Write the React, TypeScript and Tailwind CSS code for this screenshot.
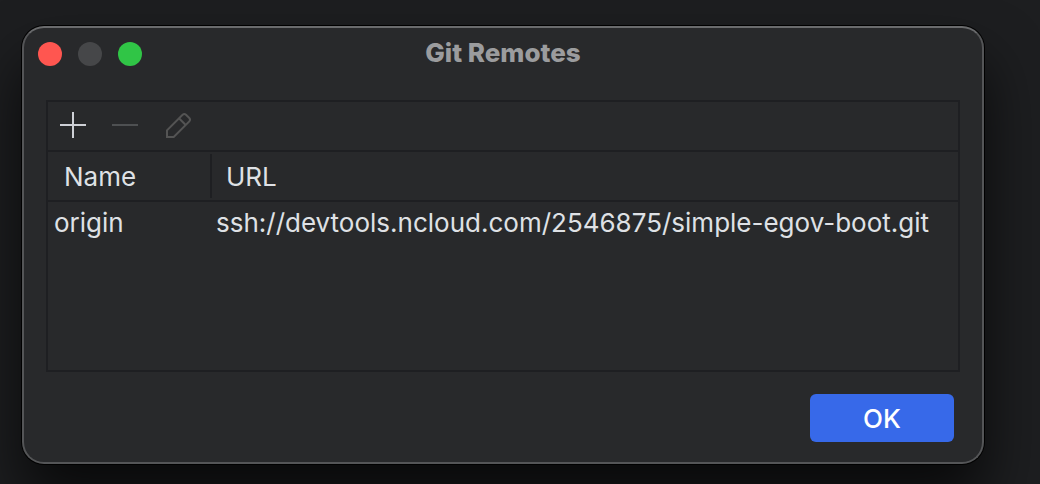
import { useState } from "react";

type Remote = { name: string; url: string };

const remotes: Remote[] = [
  { name: "origin", url: "ssh://devtools.ncloud.com/2546875/simple-egov-boot.git" },
];

function AddIcon() {
  return (
    <svg viewBox="0 0 32 32" className="size-8" fill="none" stroke="currentColor" strokeWidth="2" aria-hidden="true">
      <path d="M3 15H29M16 2V28" />
    </svg>
  );
}

function RemoveIcon() {
  return (
    <svg viewBox="0 0 32 32" className="size-8" fill="none" stroke="currentColor" strokeWidth="2" aria-hidden="true">
      <path d="M3 15H29" />
    </svg>
  );
}

function EditIcon() {
  return (
    <svg viewBox="0 0 32 32" className="size-8" fill="none" stroke="currentColor" strokeWidth="2" aria-hidden="true">
      <path d="M6 27V20.3L21.6 4.7Q23.3 3.2 25 4.7L28.3 8Q29.8 9.7 28.3 11.4L12.7 27Z" />
      <path d="M18 8.3L24.7 15" />
    </svg>
  );
}

function TitleBar() {
  return (
    <header className="grid h-[52px] grid-cols-[1fr_auto_1fr] items-center px-3.5">
      <div className="flex gap-4">
        <button type="button" aria-label="Close" className="size-6 rounded-full bg-[#ff5650]" />
        <button type="button" aria-label="Minimize" disabled className="size-6 rounded-full bg-[#464749]" />
        <button type="button" aria-label="Zoom" className="size-6 rounded-full bg-[#30c546]" />
      </div>
      <h1 className="pb-0.5 text-[26px] leading-8 font-extrabold text-[#9b9c9e]">Git Remotes</h1>
    </header>
  );
}

function Toolbar() {
  return (
    <div className="flex h-[50px] items-center gap-5 border-b-2 border-[#1e1f22] px-[9px]">
      <button type="button" aria-label="Add" className="text-[#ced0d6]">
        <AddIcon />
      </button>
      <button type="button" aria-label="Remove" disabled className="text-[#4e5052]">
        <RemoveIcon />
      </button>
      <button type="button" aria-label="Edit" disabled className="text-[#545454]">
        <EditIcon />
      </button>
    </div>
  );
}

export default function App() {
  const [open, setOpen] = useState(true);

  return (
    <main className="min-h-screen overflow-hidden bg-[#1d1e20] pt-[26px] pr-14 pb-5 pl-[22px] font-['Inter',sans-serif] text-[26px] leading-8 text-[#dfe1e5]">
      {open && (
        <section
          role="dialog"
          aria-label="Git Remotes"
          className="rounded-[22px] border-2 border-[#545557] border-t-[#6a6b6d] bg-[#28292b] shadow-[0_0_0_1px_#000000,0_36px_60px_rgba(0,0,0,0.7)]"
        >
          <TitleBar />
          <div className="px-[22px] pt-5 pb-5">
            <div className="min-h-[272px] border-2 border-[#1e1f22]">
              <Toolbar />
              <table className="w-full table-fixed border-separate border-spacing-0 text-left">
                <thead>
                  <tr>
                    <th scope="col" className="w-[164px] border-b-2 border-[#1e1f22] p-0 py-0.5 font-normal">
                      <div className="flex h-11 items-center border-r-2 border-[#1e1f22] pt-0.5 pl-4">Name</div>
                    </th>
                    <th scope="col" className="border-b-2 border-[#1e1f22] p-0 pt-0.5 pl-3.5 font-normal">
                      URL
                    </th>
                  </tr>
                </thead>
                <tbody>
                  {remotes.map((remote) => (
                    <tr key={remote.name} className="h-[42px]">
                      <td className="p-0 pl-1.5">{remote.name}</td>
                      <td className="p-0 pl-1 whitespace-nowrap">{remote.url}</td>
                    </tr>
                  ))}
                </tbody>
              </table>
            </div>
            <footer className="flex justify-end pt-[22px] pr-1.5">
              <button
                type="button"
                onClick={() => setOpen(false)}
                className="h-12 w-36 rounded-md bg-[#3769e9] pt-0.5 font-medium text-white"
              >
                OK
              </button>
            </footer>
          </div>
        </section>
      )}
    </main>
  );
}
